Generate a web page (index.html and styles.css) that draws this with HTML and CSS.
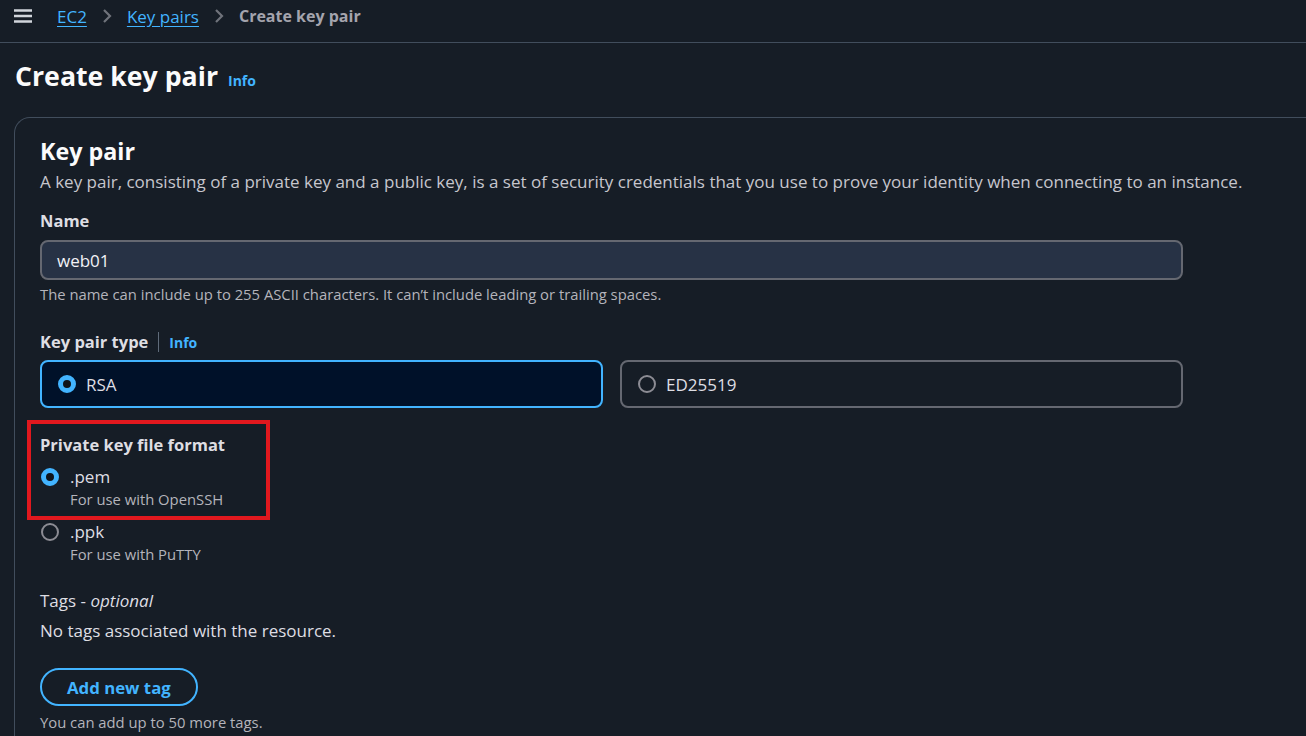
FILE: index.html
```html
<!DOCTYPE html>
<html lang="en">
<head>
<meta charset="utf-8">
<title>Create key pair</title>
<link rel="stylesheet" href="styles.css">
</head>
<body>
<header class="topbar">
  <svg class="menu-icon" width="18" height="14" viewBox="0 0 18 14"><path d="M0 1.5h18M0 7h18M0 12.5h18" stroke="#d1d5db" stroke-width="2.4" fill="none"/></svg>
  <nav class="crumbs">
    <a class="crumb-link" href="#">EC2</a>
    <svg class="chev" width="10" height="16" viewBox="0 0 10 16"><path d="M2 2l6 6-6 6" stroke="#6f737b" stroke-width="2.2" fill="none"/></svg>
    <a class="crumb-link" href="#">Key pairs</a>
    <svg class="chev" width="10" height="16" viewBox="0 0 10 16"><path d="M2 2l6 6-6 6" stroke="#6f737b" stroke-width="2.2" fill="none"/></svg>
    <span class="crumb-current">Create key pair</span>
  </nav>
</header>

<main class="page">
  <div class="page-title">
    <h1>Create key pair</h1>
    <a class="info" href="#">Info</a>
  </div>

  <section class="card">
    <h2>Key pair</h2>
    <p class="desc">A key pair, consisting of a private key and a public key, is a set of security credentials that you use to prove your identity when connecting to an instance.</p>

    <div class="field">
      <label class="label">Name</label>
      <div class="input">web01</div>
      <p class="hint">The name can include up to 255 ASCII characters. It can’t include leading or trailing spaces.</p>
    </div>

    <div class="field field-type">
      <div class="label-row"><span class="label">Key pair type</span><span class="divider"></span><a class="info" href="#">Info</a></div>
      <div class="tiles">
        <div class="tile selected"><span class="radio on"></span><span>RSA</span></div>
        <div class="tile"><span class="radio"></span><span>ED25519</span></div>
      </div>
    </div>

    <div class="field field-format">
      <div class="highlight"></div>
      <span class="label">Private key file format</span>
      <div class="options">
        <div class="option"><span class="radio on"></span><div><div class="opt-title">.pem</div><div class="opt-desc">For use with OpenSSH</div></div></div>
        <div class="option"><span class="radio"></span><div><div class="opt-title">.ppk</div><div class="opt-desc">For use with PuTTY</div></div></div>
      </div>
    </div>

    <div class="field field-tags">
      <div class="tags-label">Tags - <i>optional</i></div>
      <p class="no-tags">No tags associated with the resource.</p>
      <button class="btn">Add new tag</button>
      <p class="hint">You can add up to 50 more tags.</p>
    </div>
  </section>
</main>
</body>
</html>
```

FILE: styles.css
```css
* { box-sizing: border-box; }
html, body { margin: 0; padding: 0; }
body {
  background: #161d26;
  color: #dedee3;
  font-family: "Open Sans", "Noto Sans", sans-serif;
  font-size: 17px;
  width: 1306px;
  height: 736px;
  overflow: hidden;
}
a { text-decoration: none; }

.topbar {
  height: 43px;
  border-bottom: 1px solid #414d5c;
  display: flex;
  align-items: center;
  padding: 0 0 10px 14px;
}
.menu-icon { display: block; margin-right: 25px; }
.crumbs { display: flex; align-items: center; }
.crumb-link {
  color: #42b4ff;
  text-decoration: underline;
  text-underline-offset: 3px;
  font-size: 17px;
}
.chev { margin: 0 15px 0 15px; }
.crumb-current { color: #a4a4ad; font-weight: 700; font-size: 16px; }

.page { padding: 0 0 0 14px; }
.page-title {
  display: flex;
  align-items: baseline;
  gap: 10px;
  padding: 15px 0 0 1px;
  height: 74px;
}
h1 {
  margin: 0;
  font-size: 26.7px;
  font-weight: 700;
  color: #fbfbfb;
  line-height: 36px;
}
.info { color: #42b4ff; font-weight: 700; font-size: 14px; }

.card {
  border: 1px solid #414d5c;
  border-right: none;
  border-bottom: none;
  border-radius: 16px 0 0 0;
  margin-right: -20px;
  padding: 18px 25px 40px;
  min-height: 700px;
}
h2 {
  margin: 0;
  font-size: 23.3px;
  font-weight: 700;
  color: #fbfbfb;
  line-height: 30px;
}
.desc { margin: 5px 0 0; color: #c6c6cd; line-height: 22px; }

.field { width: 1143px; }
.label { font-weight: 700; font-size: 16.5px; color: #dedee3; line-height: 22px; }
.field > .label { display: block; margin-top: 17px; }
.input {
  margin-top: 8px;
  height: 40px;
  border: 2px solid #656871;
  border-radius: 8px;
  background: #273245;
  color: #f3f3f7;
  padding: 0 15px;
  display: flex;
  align-items: center;
}
.hint { margin: 4px 0 0; font-size: 14.8px; color: #b4b4bb; line-height: 20px; }

.field-type { margin-top: 27px; }
.label-row { display: flex; align-items: center; }
.divider { width: 1px; height: 20px; background: #5f6b7a; margin: 0 10px; }
.tiles {
  margin-top: 7px;
  display: grid;
  grid-template-columns: 1fr 1fr;
  gap: 17px;
}
.tile {
  height: 48px;
  border: 2px solid #656871;
  border-radius: 8px;
  display: flex;
  align-items: center;
  gap: 10px;
  padding: 0 16px;
  color: #dedee3;
}
.tile.selected { border-color: #42b4ff; background: #001129; }

.radio {
  width: 18px;
  height: 18px;
  border-radius: 50%;
  border: 2px solid #8c8c94;
  flex: none;
  display: inline-block;
}
.radio.on { border: 5px solid #42b4ff; background: #0f141a; }

.field-format { position: relative; margin-top: 26px; }
.field-format > .label { margin-top: 0; }
.highlight {
  position: absolute;
  left: -13px;
  top: -14px;
  width: 243px;
  height: 100px;
  border: 4px solid #e1181e;
  pointer-events: none;
}
.options { display: flex; flex-direction: column; gap: 11px; margin-top: 9px; }
.option { display: flex; align-items: flex-start; gap: 11px; padding-left: 1px; }
.option .radio { margin-top: 3px; }
.opt-title { line-height: 24px; color: #dedee3; }
.opt-desc { font-size: 14.8px; color: #b4b4bb; line-height: 20px; }

.field-tags { margin-top: 26px; }
.tags-label { line-height: 22px; }
.no-tags { margin: 8px 0 0; line-height: 22px; }
.btn {
  margin-top: 26px;
  height: 38px;
  padding: 0 25px;
  border: 2px solid #42b4ff;
  border-radius: 20px;
  background: transparent;
  color: #42b4ff;
  font-family: inherit;
  font-size: 16.8px;
  font-weight: 700;
}
.field-tags .hint { margin-top: 6px; }
```
